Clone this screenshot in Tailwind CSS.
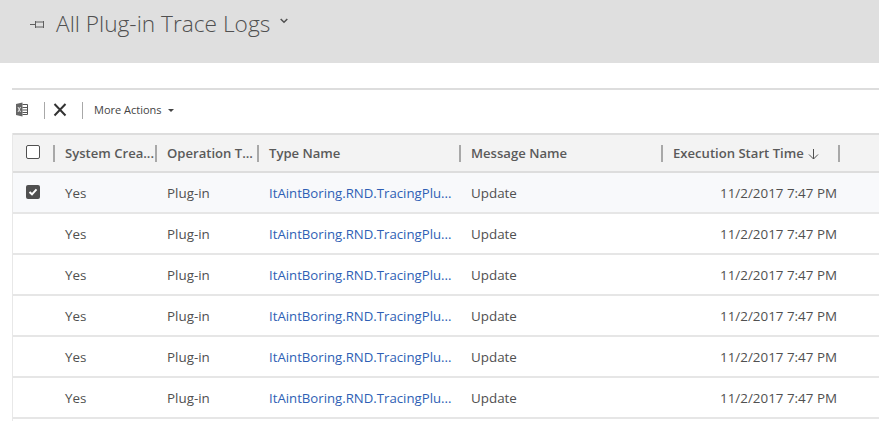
<!DOCTYPE html>
<html><head><meta charset="utf-8"><script src="https://cdn.jsdelivr.net/npm/@tailwindcss/browser@4"></script></head>
<body class="bg-white overflow-hidden">
<div class="w-[879px] h-[421px] overflow-hidden font-['Open_Sans',sans-serif] text-[13.4px] text-[#505050]">
  <header class="h-[63px] bg-[#dfdfdf] flex items-start pl-[30px] pt-[6px]">
    <svg width="15" height="9" viewBox="0 0 15 9" class="mt-[14px]" fill="none" stroke="#5f5f5f"><path d="M0 4.500H5M5.500 1V8M5.500 2H13M5.500 7H13M13.500 1V8"/></svg>
    <h1 class="ml-[11px] text-[22.7px] leading-[36px] font-light text-[#505050]">All Plug-in Trace Logs</h1>
    <svg width="8" height="6" viewBox="0 0 8 6" class="ml-[10px] mt-[12px]" fill="none" stroke="#505050" stroke-width="1.500"><path d="M.7 1 4 4.300 7.300 1"/></svg>
  </header>
  <main class="mt-[25px] ml-[12px]">
    <div class="h-[45px] border-t-2 border-[#dddddd] flex items-center pl-[4px] pb-[2px]">
      <svg width="12" height="15" viewBox="0 0 12 15" class="-mt-[2px]" fill="none"><path d="M0 2 6.500 .5V14.500L0 13Z" fill="#666"/><path d="M6.500 2.500H11.500V12.500H6.500M6.500 5.500H11.500M6.500 8H11.500M6.500 10.500H11.500" stroke="#555"/><path d="M2 5 4.500 10M4.500 5 2 10" stroke="#e4e4e4"/></svg>
      <span class="ml-[16px] w-px h-[17px] bg-[#a8a8a8]"></span>
      <svg width="14" height="14" viewBox="0 0 14 14" class="ml-[8px] -mt-[1px]" fill="none" stroke="#333" stroke-width="2"><path d="M1.500 1 12.500 12.500M12.500 1 1.500 12.500"/></svg>
      <span class="ml-[15px] w-px h-[17px] bg-[#a8a8a8]"></span>
      <span class="ml-[11px] text-[11px] text-[#444]">More Actions</span>
      <svg width="6" height="3" viewBox="0 0 6 3" class="ml-[6px]"><path d="M0 0H6L3 3Z" fill="#444"/></svg>
    </div>
    <div class="w-[867px] h-[290px] border-l border-[#e8e8e8]">
      <div class="h-[40px] bg-[#f3f3f3] border-y-2 border-[#dddddd] flex items-center font-semibold text-[13.1px] text-[#5a5a5a]">
        <div class="w-[40px] pl-[13px] -mt-[3px]"><span class="block w-[14px] h-[14px] border border-[#505050] rounded-[2px] bg-white"></span></div>
        <div class="w-[102px] h-[17px] border-l-2 border-[#a8a8a8] pl-[10px] flex items-center whitespace-nowrap pt-[2px]">System Crea...</div>
        <div class="w-[102px] h-[17px] border-l-2 border-[#a8a8a8] pl-[10px] flex items-center whitespace-nowrap pt-[2px]">Operation T...</div>
        <div class="w-[202px] h-[17px] border-l-2 border-[#a8a8a8] pl-[10px] flex items-center pt-[2px]">Type Name</div>
        <div class="w-[202px] h-[17px] border-l-2 border-[#a8a8a8] pl-[10px] flex items-center pt-[2px]">Message Name</div>
        <div class="w-[179px] h-[17px] border-l-2 border-r-2 border-[#a8a8a8] pl-[10px] flex items-center gap-[4px] whitespace-nowrap pt-[2px]">Execution Start Time
          <svg width="11" height="11" viewBox="0 0 11 11" fill="none" stroke="#505050"><path d="M5.500 0V10M1 5.500 5.500 10 10 5.500"/></svg></div>
      </div>
      <div class="h-[41px] bg-[#f8f9fb] border-b-2 border-[#e6e6e6] flex items-center">
        <div class="w-[40px] pl-[13px] -mt-[2px]"><span class="flex items-center justify-center w-[14px] h-[14px] rounded-[2px] bg-[#505050]"><svg width="10" height="8" viewBox="0 0 10 8" fill="none" stroke="#fff" stroke-width="2"><path d="M1.500 4 4 6.300 8.500 1.300"/></svg></span></div>
        <div class="w-[102px] pl-[12px] pt-[2px]">Yes</div><div class="w-[102px] pl-[12px] pt-[2px]">Plug-in</div><div class="w-[202px] pl-[12px] pt-[2px] text-[13.2px] text-[#2f5fb5] whitespace-nowrap">ItAintBoring.RND.TracingPlu...</div><div class="w-[202px] pl-[12px] pt-[2px]">Update</div><div class="w-[177px] pr-[1px] pt-[2px] text-right">11/2/2017 7:47 PM</div>
      </div>
      <div class="h-[41px] border-b-2 border-[#e6e6e6] flex items-center">
        <div class="w-[40px]"></div>
        <div class="w-[102px] pl-[12px] pt-[2px]">Yes</div><div class="w-[102px] pl-[12px] pt-[2px]">Plug-in</div><div class="w-[202px] pl-[12px] pt-[2px] text-[13.2px] text-[#2f5fb5] whitespace-nowrap">ItAintBoring.RND.TracingPlu...</div><div class="w-[202px] pl-[12px] pt-[2px]">Update</div><div class="w-[177px] pr-[1px] pt-[2px] text-right">11/2/2017 7:47 PM</div>
      </div>
      <div class="h-[41px] border-b-2 border-[#e6e6e6] flex items-center">
        <div class="w-[40px]"></div>
        <div class="w-[102px] pl-[12px] pt-[2px]">Yes</div><div class="w-[102px] pl-[12px] pt-[2px]">Plug-in</div><div class="w-[202px] pl-[12px] pt-[2px] text-[13.2px] text-[#2f5fb5] whitespace-nowrap">ItAintBoring.RND.TracingPlu...</div><div class="w-[202px] pl-[12px] pt-[2px]">Update</div><div class="w-[177px] pr-[1px] pt-[2px] text-right">11/2/2017 7:47 PM</div>
      </div>
      <div class="h-[41px] border-b-2 border-[#e6e6e6] flex items-center">
        <div class="w-[40px]"></div>
        <div class="w-[102px] pl-[12px] pt-[2px]">Yes</div><div class="w-[102px] pl-[12px] pt-[2px]">Plug-in</div><div class="w-[202px] pl-[12px] pt-[2px] text-[13.2px] text-[#2f5fb5] whitespace-nowrap">ItAintBoring.RND.TracingPlu...</div><div class="w-[202px] pl-[12px] pt-[2px]">Update</div><div class="w-[177px] pr-[1px] pt-[2px] text-right">11/2/2017 7:47 PM</div>
      </div>
      <div class="h-[41px] border-b-2 border-[#e6e6e6] flex items-center">
        <div class="w-[40px]"></div>
        <div class="w-[102px] pl-[12px] pt-[2px]">Yes</div><div class="w-[102px] pl-[12px] pt-[2px]">Plug-in</div><div class="w-[202px] pl-[12px] pt-[2px] text-[13.2px] text-[#2f5fb5] whitespace-nowrap">ItAintBoring.RND.TracingPlu...</div><div class="w-[202px] pl-[12px] pt-[2px]">Update</div><div class="w-[177px] pr-[1px] pt-[2px] text-right">11/2/2017 7:47 PM</div>
      </div>
      <div class="h-[41px] border-b-2 border-[#e6e6e6] flex items-center">
        <div class="w-[40px]"></div>
        <div class="w-[102px] pl-[12px] pt-[2px]">Yes</div><div class="w-[102px] pl-[12px] pt-[2px]">Plug-in</div><div class="w-[202px] pl-[12px] pt-[2px] text-[13.2px] text-[#2f5fb5] whitespace-nowrap">ItAintBoring.RND.TracingPlu...</div><div class="w-[202px] pl-[12px] pt-[2px]">Update</div><div class="w-[177px] pr-[1px] pt-[2px] text-right">11/2/2017 7:47 PM</div>
      </div>
    </div>
  </main>
</div>
</body></html>
